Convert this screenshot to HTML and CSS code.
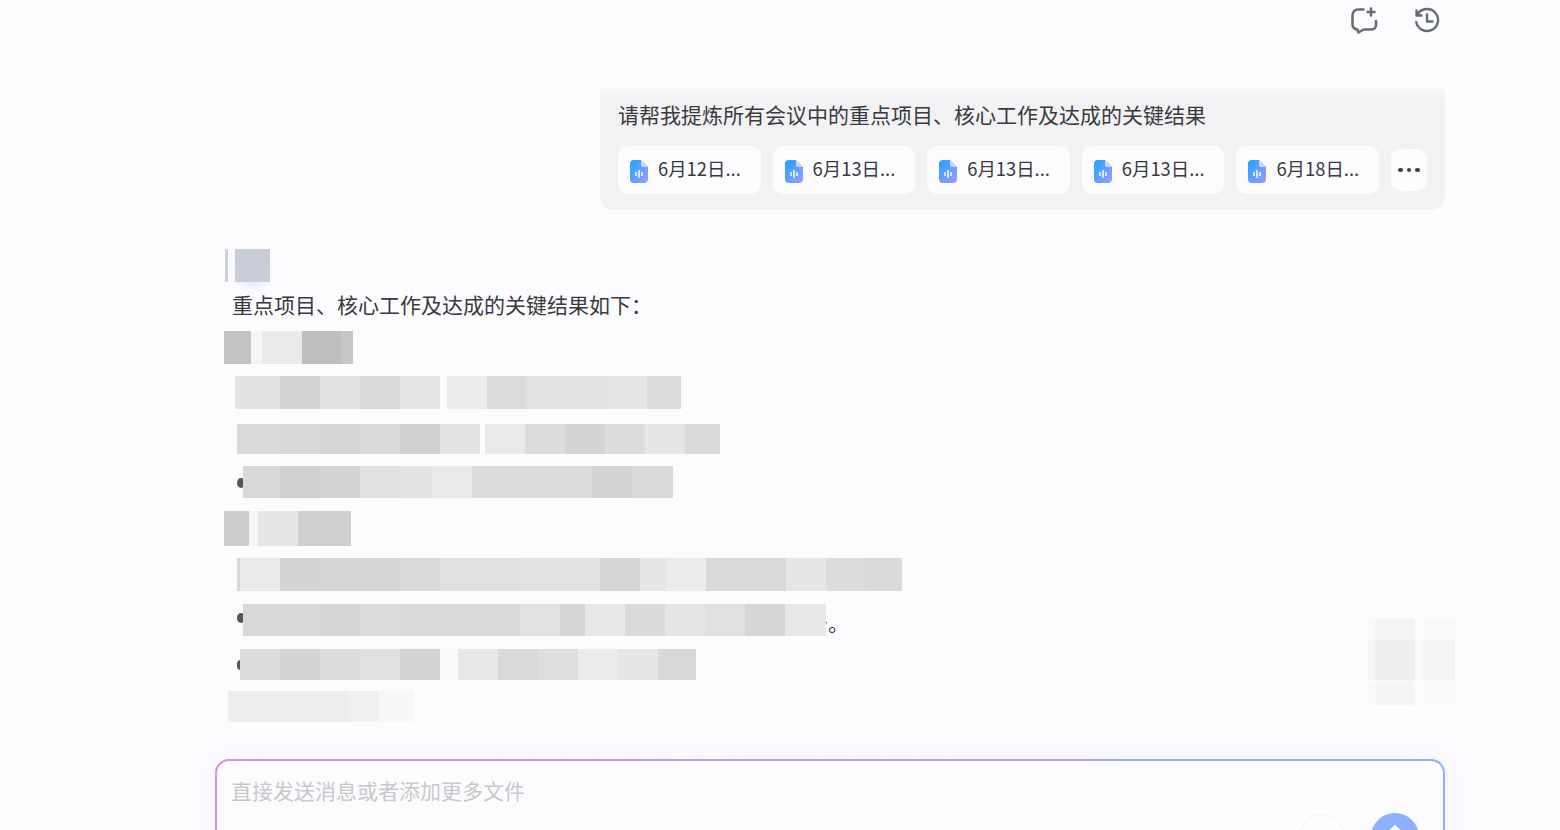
FILE: index.html
```html
<!DOCTYPE html>
<html lang="zh-CN">
<head>
<meta charset="UTF-8">
<title>会议总结</title>
<link rel="stylesheet" href="styles.css">
</head>
<body>
<div class="page">
  <header class="top-bar">
    <button class="icon-btn" aria-label="新建对话">
      <svg width="28" height="28" viewBox="0 0 28 28" fill="none" stroke="#666c78" stroke-width="2.6" stroke-linecap="round" stroke-linejoin="round">
        <path d="M13.500 3.500H8A5.500 5.500 0 0 0 2.500 9V18.500A5 5 0 0 0 7.500 23.500L8.500 26.500L13.500 23.500H21.500A4.500 4.500 0 0 0 26 19V15"/>
        <path d="M21 2.500V9.500M17.500 6H24.500"/>
      </svg>
    </button>
    <button class="icon-btn" aria-label="历史记录">
      <svg width="28" height="28" viewBox="0 0 28 28" fill="none" stroke="#666c78" stroke-width="2.4" stroke-linecap="round" stroke-linejoin="round">
        <path d="M4.800 8A11 11 0 1 1 3.200 16"/>
        <path d="M3.500 4.500V9.500H8.500" fill="#666c78"/>
        <path d="M14 8.500V15.500H19.500"/>
      </svg>
    </button>
  </header>

  <main class="chat">
    <section class="question">
      <p class="question-text">请帮我提炼所有会议中的重点项目、核心工作及达成的关键结果</p>
      <div class="chips">
        <div class="chip"><svg class="file-icon" viewBox="0 0 18 23"><use href="#audio-file"/></svg><span>6月12日...</span></div>
        <div class="chip"><svg class="file-icon" viewBox="0 0 18 23"><use href="#audio-file"/></svg><span>6月13日...</span></div>
        <div class="chip"><svg class="file-icon" viewBox="0 0 18 23"><use href="#audio-file"/></svg><span>6月13日...</span></div>
        <div class="chip"><svg class="file-icon" viewBox="0 0 18 23"><use href="#audio-file"/></svg><span>6月13日...</span></div>
        <div class="chip"><svg class="file-icon" viewBox="0 0 18 23"><use href="#audio-file"/></svg><span>6月18日...</span></div>
        <div class="more"><i></i><i></i><i></i></div>
      </div>
    </section>

    <section class="answer">
      <div class="avatar"><i class="avatar-bar"></i><i class="avatar-face"></i></div>
      <p class="answer-line">重点项目、核心工作及达成的关键结果如下：</p>

      <div class="row row-1">
        <i class="w27 s-c3"></i><i class="w11 s-f5"></i><i class="w40 s-ea"></i><i class="w40 s-be"></i><i class="w11 s-c6"></i>
      </div>
      <div class="row row-2">
        <i class="w5 s-e6"></i><i class="w40 s-e0"></i><i class="w40 s-d4"></i><i class="w40 s-e0"></i><i class="w40 s-da"></i><i class="w40 s-e6"></i><i class="w7 s-bg"></i><i class="w40 s-eb"></i><i class="w40 s-dc"></i><i class="w80 s-e2"></i><i class="w40 s-e6"></i><i class="w34 s-dc"></i>
      </div>
      <div class="row row-3">
        <i class="w43 s-d9"></i><i class="w40 s-d8"></i><i class="w40 s-d5"></i><i class="w40 s-d9"></i><i class="w40 s-d0"></i><i class="w40 s-e3"></i><i class="w5 s-bg"></i><i class="w40 s-e9"></i><i class="w40 s-dc"></i><i class="w40 s-d4"></i><i class="w40 s-dc"></i><i class="w40 s-e6"></i><i class="w35 s-da"></i>
      </div>
      <div class="row row-4">
        <b class="dot"></b><i class="w37 s-d8"></i><i class="w40 s-d0"></i><i class="w40 s-d4"></i><i class="w40 s-e0"></i><i class="w32 s-e3"></i><i class="w40 s-e9"></i><i class="w120 s-dc"></i><i class="w40 s-d3"></i><i class="w41 s-da"></i>
      </div>
      <div class="row row-5">
        <i class="w25 s-cd"></i><i class="w9 s-f5"></i><i class="w40 s-e6"></i><i class="w53 s-cf"></i>
      </div>
      <div class="row row-6">
        <i class="w3 s-d8"></i><i class="w40 s-ea"></i><i class="w40 s-d4"></i><i class="w80 s-d6"></i><i class="w40 s-da"></i><i class="w80 s-e0"></i><i class="w80 s-e2"></i><i class="w40 s-d6"></i><i class="w26 s-e6"></i><i class="w40 s-eb"></i><i class="w80 s-d9"></i><i class="w40 s-e6"></i><i class="w40 s-dc"></i><i class="w36 s-da"></i>
      </div>
      <div class="row row-7">
        <b class="dot"></b><i class="w77 s-d8"></i><i class="w40 s-d5"></i><i class="w40 s-dc"></i><i class="w120 s-d9"></i><i class="w40 s-e2"></i><i class="w25 s-d6"></i><i class="w40 s-e8"></i><i class="w40 s-da"></i><i class="w40 s-e6"></i><i class="w40 s-e0"></i><i class="w40 s-d6"></i><i class="w41 s-e8 on-top"></i><span class="tail-text">务。</span>
      </div>
      <div class="row row-8">
        <b class="dot"></b><i class="w40 s-dc"></i><i class="w40 s-d4"></i><i class="w40 s-dc"></i><i class="w40 s-e0"></i><i class="w40 s-d3"></i><i class="w18 s-fa"></i><i class="w40 s-e8"></i><i class="w40 s-d9"></i><i class="w40 s-de"></i><i class="w40 s-eb"></i><i class="w40 s-e6"></i><i class="w38 s-d8"></i>
      </div>
      <div class="row row-9">
        <i class="w80 s-ee"></i><i class="w40 s-ec"></i><i class="w30 s-f0"></i><i class="w36 s-f7"></i>
      </div>
    </section>

    <section class="composer">
      <div class="composer-inner">
        <p class="placeholder">直接发送消息或者添加更多文件</p>
        <div class="composer-actions">
          <button class="round-btn" aria-label="语音"><i class="round-glyph"></i></button>
          <button class="send-btn" aria-label="发送">
            <svg width="20" height="14" viewBox="0 0 20 14"><path d="M10 3L16 9H4Z" fill="#fcfcff" stroke="#fcfcff" stroke-width="2" stroke-linejoin="round"/></svg>
          </button>
        </div>
      </div>
    </section>
  </main>

  <aside class="float-tool">
    <i class="s-f9"></i><i class="s-f4"></i><i class="s-fb"></i><i class="s-f9"></i>
    <i class="s-f5"></i><i class="s-ee"></i><i class="s-fa"></i><i class="s-f4"></i>
    <i class="s-fb"></i><i class="s-f7"></i><i class="s-fc"></i><i class="s-fa"></i>
    <i class="s-f9"></i><i class="s-f5"></i><i class="s-fb"></i><i class="s-f9"></i>
  </aside>
</div>

<svg class="defs" width="0" height="0">
  <defs>
    <linearGradient id="file-grad" x1="0" y1="0" x2="1" y2="1">
      <stop offset="0" stop-color="#1fa5ff"/>
      <stop offset="1" stop-color="#a09aff"/>
    </linearGradient>
    <symbol id="audio-file" viewBox="0 0 18 23">
      <path d="M4 0H11L18 7V19A4 4 0 0 1 14 23H4A4 4 0 0 1 0 19V4A4 4 0 0 1 4 0Z" fill="url(#file-grad)"/>
      <path d="M11 0L18 7H13A2 2 0 0 1 11 5Z" fill="#cfd3f7"/>
      <path d="M6 12V16M9 10V18M12 12V16" stroke="#fcfcff" stroke-width="1.500"/>
    </symbol>
  </defs>
</svg>
</body>
</html>
```

FILE: styles.css
```css
* {
  box-sizing: border-box;
}

html, body {
  margin: 0;
  height: 100%;
}

body {
  background-color: #fcfcff;
  color: #3a3a3e;
  font-family: "Noto Sans CJK SC", "Noto Sans", sans-serif;
  overflow: hidden;
}

p {
  margin: 0;
}

button {
  padding: 0;
  border: 0;
  background: none;
}

.page {
  position: relative;
  height: 830px;
  overflow: hidden;
}

.defs {
  position: absolute;
}

/* top icons */
.top-bar {
  display: flex;
  justify-content: flex-end;
  gap: 35px;
  height: 87px;
  padding: 6px 119px 0 0;
}

.icon-btn {
  width: 28px;
  height: 28px;
}

.icon-btn svg {
  display: block;
}

.chat {
  width: 1445px;
  padding-left: 215px;
}

/* question bubble */
.question {
  position: relative;
  width: 845px;
  height: 123px;
  margin-left: auto;
  padding: 10px 18px 0;
  background-color: #f2f2f4;
  border-radius: 0 0 14px 14px;
}

.question::before {
  content: "";
  position: absolute;
  left: 0;
  right: 0;
  top: 0;
  height: 12px;
  background: linear-gradient(#f9f9fb, #f2f2f4);
}

.question-text {
  position: relative;
  font-size: 21px;
  line-height: 34px;
  white-space: nowrap;
}

.chips {
  display: flex;
  align-items: center;
  gap: 12px;
  margin-top: 15px;
}

.chip {
  display: flex;
  align-items: center;
  gap: 10px;
  width: 142.6px;
  height: 48px;
  padding-left: 12px;
  background-color: #fcfcff;
  border-radius: 10px;
  font-size: 18.400px;
  white-space: nowrap;
}

.chip span {
  margin-top: -4px;
}

.file-icon {
  width: 18px;
  height: 23px;
  margin-top: 3px;
  flex: none;
}

.more {
  display: flex;
  align-items: center;
  justify-content: center;
  gap: 4px;
  width: 36px;
  height: 42px;
  background-color: #fcfcff;
  border-radius: 10px;
}

.more i {
  width: 4.500px;
  height: 4.500px;
  border-radius: 50%;
  background-color: #3f3f44;
}

/* answer */
.answer {
  margin-top: 39px;
}

.avatar {
  display: flex;
  height: 33px;
  margin-left: 10px;
  gap: 7px;
}

.avatar-bar {
  width: 3px;
  background-color: #d0d3dc;
}

.avatar-face {
  width: 35px;
  background-color: #c8cdd7;
  box-shadow: 0 6px 10px -4px rgba(130, 165, 255, 0.3);
}

.answer-line {
  height: 48px;
  margin-left: 17px;
  font-size: 21px;
  line-height: 44px;
  white-space: nowrap;
}

.row {
  display: flex;
  align-items: stretch;
}

.row i {
  flex: none;
}

.row-1 { height: 33px; margin: 1px 0 0 9px; }
.row-2 { height: 33px; margin: 12px 0 0 20px; }
.row-3 { height: 30px; margin: 15px 0 0 22px; }
.row-4 { height: 32px; margin: 12px 0 0 22px; }
.row-5 { height: 35px; margin: 13px 0 0 9px; }
.row-6 { height: 33px; margin: 12px 0 0 22px; }
.row-7 { height: 32px; margin: 13px 0 0 22px; }
.row-8 { height: 31px; margin: 13px 0 0 22px; }
.row-9 { height: 31px; margin: 11px 0 0 13px; }

.dot {
  flex: none;
  align-self: center;
  width: 8px;
  height: 10px;
  margin-right: -2px;
  border-radius: 50%;
  background-color: #555;
}

.row-4 .dot {
  margin-top: 2px;
}

.row-7 .dot {
  margin-bottom: 4px;
}

.row-8 .dot {
  width: 4px;
  margin-right: -1px;
  border-radius: 4px 0 0 4px;
}

.on-top {
  position: relative;
}

.tail-text {
  flex: none;
  margin-left: -19px;
  font-size: 21px;
  line-height: 36px;
}

/* tile widths */
.w3 { width: 3px; }
.w5 { width: 5px; }
.w7 { width: 7px; }
.w9 { width: 9px; }
.w11 { width: 11px; }
.w18 { width: 18px; }
.w25 { width: 25px; }
.w26 { width: 26px; }
.w27 { width: 27px; }
.w30 { width: 30px; }
.w32 { width: 32px; }
.w34 { width: 34px; }
.w35 { width: 35px; }
.w36 { width: 36px; }
.w37 { width: 37px; }
.w38 { width: 38px; }
.w40 { width: 40px; }
.w41 { width: 41px; }
.w43 { width: 43px; }
.w53 { width: 53px; }
.w77 { width: 77px; }
.w80 { width: 80px; }
.w120 { width: 120px; }

/* tile shades */
.s-bg { background-color: #fcfcff; }
.s-be { background-color: #bebebf; }
.s-c3 { background-color: #c3c3c3; }
.s-c6 { background-color: #c6c6c6; }
.s-cd { background-color: #cdcdce; }
.s-cf { background-color: #cfcfd0; }
.s-d0 { background-color: #d0d0d1; }
.s-d3 { background-color: #d3d3d3; }
.s-d4 { background-color: #d4d4d5; }
.s-d5 { background-color: #d5d5d6; }
.s-d6 { background-color: #d6d6d7; }
.s-d8 { background-color: #d8d8d9; }
.s-d9 { background-color: #d9d9da; }
.s-da { background-color: #dadadb; }
.s-dc { background-color: #dcdcdd; }
.s-de { background-color: #dedede; }
.s-e0 { background-color: #e0e0e1; }
.s-e2 { background-color: #e2e2e3; }
.s-e3 { background-color: #e3e3e4; }
.s-e6 { background-color: #e6e6e7; }
.s-e8 { background-color: #e8e8e9; }
.s-e9 { background-color: #e9e9ea; }
.s-ea { background-color: #eaeaeb; }
.s-eb { background-color: #ebebec; }
.s-ec { background-color: #ecedee; }
.s-ee { background-color: #eeeeef; }
.s-f0 { background-color: #f0f0f1; }
.s-f4 { background-color: #f4f4f6; }
.s-f5 { background-color: #f5f5f6; }
.s-f7 { background-color: #f7f7f8; }
.s-f9 { background-color: #f9f9fa; }
.s-fa { background-color: #fafafb; }
.s-fb { background-color: #fbfbfc; }
.s-fc { background-color: #fcfcfe; }

/* composer */
.composer {
  width: 1230px;
  height: 140px;
  margin-top: 37px;
  padding: 2px;
  border-radius: 14px;
  background: linear-gradient(90deg, #d88cf6, #8ab0ff);
  box-shadow: 0 0 36px rgba(110, 110, 170, 0.07);
}

.composer-inner {
  position: relative;
  height: 100%;
  padding: 13px 14px 0;
  background-color: #fcfcff;
  border-radius: 12px;
}

.placeholder {
  color: #c8c8cb;
  font-size: 21px;
  line-height: 32px;
}

.composer-actions {
  display: flex;
  align-items: center;
  gap: 26px;
  position: absolute;
  right: 24px;
  top: 52px;
}

.round-btn {
  width: 46px;
  height: 46px;
  border: 1px solid #f2f2f4;
  border-radius: 50%;
  padding-top: 13px;
}

.round-glyph {
  display: block;
  width: 18px;
  height: 10px;
  margin: 0 auto;
  border-radius: 50% 50% 0 0;
  background-color: #c8c8cb;
}

.send-btn {
  display: flex;
  justify-content: center;
  width: 48px;
  height: 48px;
  padding-top: 10px;
  border-radius: 50%;
  background-color: #8fb0ff;
}

/* floating tool, blurred in the source */
.float-tool {
  position: absolute;
  left: 1368px;
  top: 619px;
  display: grid;
  grid-template-columns: 7px 40px 8px 32px;
  grid-template-rows: 21px 40px 5px 20px;
}
```
